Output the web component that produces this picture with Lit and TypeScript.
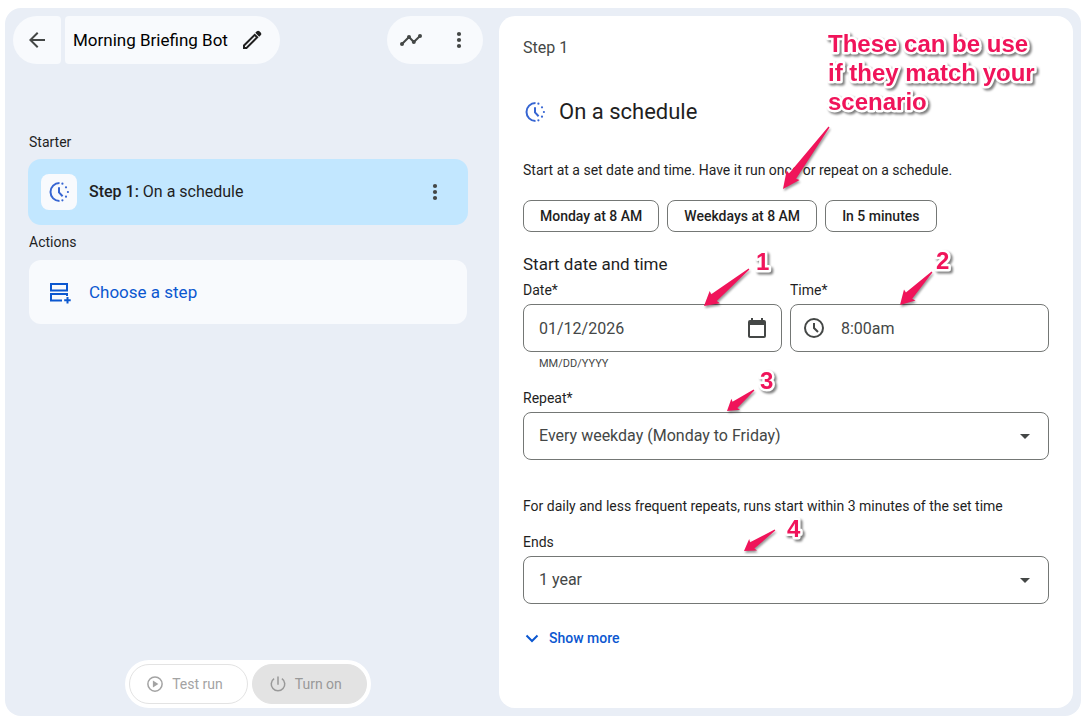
import { LitElement, html, svg, css } from "lit";
import { customElement } from "lit/decorators.js";

type Point = [number, number];

/** Tapered arrow outline running from a thin tail to a barbed tip. */
function arrowPoints(tail: Point, tip: Point, head: number, wing: number): string {
  const dx = tail[0] - tip[0];
  const dy = tail[1] - tip[1];
  const len = Math.hypot(dx, dy);
  const ux = dx / len;
  const uy = dy / len;
  const at = (along: number, side: number) =>
    `${(tip[0] + ux * along + uy * side).toFixed(1)},${(tip[1] + uy * along - ux * side).toFixed(1)}`;
  const neck = wing * 0.55;
  return [
    at(len, -0.6),
    at(head - 1, -neck),
    at(head, -wing),
    at(0, 0),
    at(head, wing),
    at(head - 1, neck),
    at(len, 0.6),
  ].join(" ");
}

const scheduleIcon = html`<svg class="icon schedule" viewBox="0 0 24 24" aria-hidden="true">
  <path class="line" d="M12.5 3A9 9 0 0 0 12.5 21M12 7.2v5.2l3.6 3.8" />
  <circle cx="15.4" cy="3.7" r="1.1" />
  <circle cx="19" cy="7.3" r="1.1" />
  <circle cx="20.9" cy="12" r="1.1" />
  <circle cx="19" cy="16.7" r="1.1" />
  <circle cx="15.4" cy="20.3" r="1.1" />
</svg>`;

const moreIcon = html`<svg class="icon" viewBox="0 0 24 24" aria-hidden="true">
  <circle cx="12" cy="6" r="2.1" /><circle cx="12" cy="12" r="2.1" /><circle cx="12" cy="18" r="2.1" />
</svg>`;

const caretIcon = html`<svg class="icon caret" viewBox="0 0 24 24" aria-hidden="true">
  <path d="M7 10l5 5 5-5z" />
</svg>`;

@customElement("app-root")
export class AppRoot extends LitElement {
  static styles = css`
    :host {
      display: flex;
      box-sizing: border-box;
      min-height: 100vh;
      padding: 8px 4px 5px 5px;
      background: #fff;
      color: #1f1f1f;
      font-family: Roboto, "Liberation Sans", sans-serif;
      font-size: 14px;
      line-height: 20px;
    }
    * { box-sizing: border-box; }
    button, input, select { font: inherit; color: inherit; margin: 0; }
    button { border: 0; padding: 0; background: none; cursor: pointer; }
    h1, h2, h3, p { margin: 0; font-weight: 400; }
    .icon { width: 24px; height: 24px; flex: none; display: block; fill: currentColor; }
    .line { fill: none; stroke: currentColor; stroke-width: 2; }
    .schedule { color: #3665d2; }

    .shell {
      flex: 1;
      display: grid;
      grid-template-columns: 235fr 287fr;
      gap: 16px;
      padding: 8px;
      border-radius: 16px;
      background: #e9eef6;
    }
    .flow { display: flex; flex-direction: column; min-width: 0; }

    .toolbar { display: flex; justify-content: space-between; color: #444746; }
    .group { display: flex; gap: 4px; }
    .square { width: 48px; height: 48px; display: grid; place-items: center; color: #444746; }
    .back { border-radius: 24px 4px 4px 24px; background: #f8fafd; }
    .name {
      display: flex;
      align-items: center;
      gap: 12px;
      height: 48px;
      padding: 0 16px 0 8px;
      border-radius: 4px 24px 24px 4px;
      background: #f8fafd;
      color: #1f1f1f;
    }
    .name h1 { font-size: 17px; line-height: 24px; font-weight: 450; color: #000; }
    .tools { display: flex; border-radius: 24px; background: #f8fafd; }

    .steps { flex: 1; padding: 68px 16px 0; }
    .steps h2 { font-size: 14px; line-height: 20px; font-weight: 450; }
    .step {
      display: flex;
      align-items: center;
      gap: 12px;
      width: 100%;
      height: 64px;
      margin: 8px 0;
      padding: 0 8px 0 12px;
      border-radius: 12px;
      background: #f8fafd;
      font-size: 16px;
      line-height: 24px;
      text-align: left;
    }
    .selected { background: #c2e7ff; box-shadow: 0 0 0 1px #c2e7ff; }
    .selected .label { flex: 1; }
    .selected b { font-weight: 500; }
    .badge { width: 36px; height: 36px; display: grid; place-items: center; border-radius: 8px; }
    .selected .badge { background: #f8fafd; }
    .choose { color: #0b57d0; font-size: 17px; font-weight: 450; }

    .runbar {
      align-self: center;
      display: flex;
      gap: 4px;
      padding: 4px;
      border-radius: 24px;
      background: #fff;
    }
    .run {
      display: flex;
      align-items: center;
      gap: 8px;
      height: 40px;
      padding: 0 24px 0 16px;
      border-radius: 20px;
      border: 1px solid #e3e3e3;
      color: #a3a3a3;
    }
    .run .icon { width: 18px; height: 18px; }
    .on { background: #e3e3e3; font-weight: 450; color: #999; }

    .panel {
      position: relative;
      display: flex;
      flex-direction: column;
      min-width: 0;
      padding: 20px 24px 24px;
      border-radius: 16px;
      background: #fff;
    }
    .crumb { font-size: 16px; line-height: 24px; color: #444746; }
    .heading { display: flex; align-items: center; gap: 12px; margin-top: 38px; }
    .heading h2 { font-size: 22px; line-height: 28px; }
    .intro { margin-top: 34px; }
    .chips { display: flex; flex-wrap: wrap; gap: 8px; margin-top: 20px; }
    .chip {
      height: 32px;
      padding: 0 16px;
      border: 1px solid #747775;
      border-radius: 8px;
      font-weight: 500;
    }
    .section { margin-top: 20px; font-size: 17px; line-height: 24px; font-weight: 450; }
    .pair { display: grid; grid-template-columns: 1fr 1fr; gap: 8px; margin-top: 4px; }
    .field { display: flex; flex-direction: column; gap: 4px; min-width: 0; }
    .field label { font-weight: 450; }
    .box {
      display: flex;
      align-items: center;
      height: 48px;
      border: 1px solid #747775;
      border-radius: 8px;
      color: #444746;
      font-size: 16px;
      line-height: 24px;
    }
    .box input {
      flex: 1;
      min-width: 0;
      height: 100%;
      padding: 0 15px;
      border: 0;
      outline: 0;
      background: none;
    }
    .box .clock { margin-left: 11px; }
    .pick { width: 48px; height: 100%; display: grid; place-items: center; }
    .hint { padding-left: 16px; font-size: 11px; line-height: 16px; color: #444746; }
    .choice { display: grid; }
    .choice select, .choice .icon { grid-area: 1 / 1; }
    .choice select {
      width: 100%;
      height: 100%;
      padding: 0 48px 0 15px;
      border: 0;
      outline: 0;
      border-radius: 8px;
      background: none;
      appearance: none;
    }
    .choice .icon { justify-self: end; margin-right: 11px; pointer-events: none; }
    .repeat { margin-top: 16px; }
    .note { margin-top: 36px; }
    .ends { margin-top: 16px; }
    .more {
      align-self: flex-start;
      display: flex;
      align-items: center;
      gap: 8px;
      margin-top: 24px;
      color: #0b57d0;
      font-weight: 500;
    }
    .more .icon { width: 18px; height: 18px; }

    .marks {
      position: absolute;
      top: 0;
      left: 0;
      width: 574px;
      height: 692px;
      pointer-events: none;
      font: bold 24px/29px "Liberation Sans", Arial, sans-serif;
      fill: #f0145a;
      overflow: visible;
    }
    .marks text {
      stroke: #fff;
      stroke-width: 5px;
      stroke-linejoin: round;
      paint-order: stroke;
      filter: drop-shadow(2px 2px 1px rgba(0, 0, 0, 0.5));
    }
    .marks polygon { filter: drop-shadow(1px 2px 1px rgba(0, 0, 0, 0.4)); }
  `;

  private arrows: { tail: Point; tip: Point; head: number; wing: number }[] = [
    { tail: [330, 111], tip: [284, 173], head: 17, wing: 8 },
    { tail: [250, 253], tip: [205, 290], head: 14, wing: 8 },
    { tail: [433, 256], tip: [401, 289], head: 14, wing: 8 },
    { tail: [255, 374], tip: [228, 395], head: 11, wing: 7 },
    { tail: [276, 514], tip: [245, 535], head: 11, wing: 7 },
  ];

  private captions: { x: number; y: number; text: string }[] = [
    { x: 329, y: 36, text: "These can be use" },
    { x: 329, y: 65, text: "if they match your" },
    { x: 329, y: 94, text: "scenario" },
    { x: 257, y: 254, text: "1" },
    { x: 437, y: 253, text: "2" },
    { x: 261, y: 373, text: "3" },
    { x: 288, y: 521, text: "4" },
  ];

  render() {
    return html`
      <main class="shell">
        <div class="flow">
          <header class="toolbar">
            <div class="group">
              <button class="square back" aria-label="Back">
                <svg class="icon" viewBox="0 0 24 24"><path d="M20 11H7.83l5.59-5.59L12 4l-8 8 8 8 1.41-1.41L7.83 13H20z" /></svg>
              </button>
              <div class="name">
                <h1>Morning Briefing Bot</h1>
                <button aria-label="Rename">
                  <svg class="icon" viewBox="0 0 24 24">
                    <path d="M3 17.1V21h3.9L18.6 9.3l-3.9-3.9zM5 19v-1.1l9.7-9.7 1.1 1.1L6.1 19zM20.7 7.2a1.9 1.9 0 0 0 0-2.6l-1.3-1.3a1.9 1.9 0 0 0-2.6 0l-1.5 1.5 3.9 3.9z" fill-rule="evenodd" />
                  </svg>
                </button>
              </div>
            </div>
            <div class="tools">
              <button class="square" aria-label="Activity">
                <svg class="icon" viewBox="0 0 24 24">
                  <path class="line" d="M3 16l7-7 4.800 5L21 8" />
                  <circle cx="3" cy="16" r="2" /><circle cx="10" cy="9" r="2" />
                  <circle cx="14.800" cy="14" r="2" /><circle cx="21" cy="8" r="2" />
                </svg>
              </button>
              <button class="square" aria-label="More options">${moreIcon}</button>
            </div>
          </header>

          <section class="steps">
            <h2>Starter</h2>
            <div class="step selected">
              <span class="badge">${scheduleIcon}</span>
              <span class="label"><b>Step 1:</b> On a schedule</span>
              <button class="square" aria-label="Step options">${moreIcon}</button>
            </div>
            <h2>Actions</h2>
            <button class="step choose">
              <span class="badge">
                <svg class="icon" viewBox="0 0 24 24">
                  <path class="line" d="M4 4h16v6.500H4zM20 16v-2H4v6.500h11M20.500 17v6.500M17.200 20.300h6.500" />
                </svg>
              </span>
              <span>Choose a step</span>
            </button>
          </section>

          <footer class="runbar">
            <button class="run">
              <svg class="icon" viewBox="0 0 24 24"><circle class="line" cx="12" cy="12" r="9.500" /><path d="M9.200 7.300v9.400l7.300-4.700z" /></svg>
              Test run
            </button>
            <button class="run on">
              <svg class="icon" viewBox="0 0 24 24"><path class="line" d="M12 2v11M6.800 4.800a9 9 0 1 0 10.400 0" /></svg>
              Turn on
            </button>
          </footer>
        </div>

        <section class="panel">
          <p class="crumb">Step 1</p>
          <div class="heading">${scheduleIcon}<h2>On a schedule</h2></div>
          <p class="intro">Start at a set date and time. Have it run once or repeat on a schedule.</p>
          <div class="chips">
            <button class="chip">Monday at 8 AM</button>
            <button class="chip">Weekdays at 8 AM</button>
            <button class="chip">In 5 minutes</button>
          </div>

          <h3 class="section">Start date and time</h3>
          <div class="pair">
            <div class="field">
              <label for="date">Date*</label>
              <div class="box">
                <input id="date" type="text" value="01/12/2026" aria-describedby="date-hint" />
                <button class="pick" aria-label="Open calendar">
                  <svg class="icon" viewBox="0 0 24 24">
                    <path d="M19 4h-1V2h-2v2H8V2H6v2H5a2 2 0 0 0-2 2v14c0 1.100.9 2 2 2h14a2 2 0 0 0 2-2V6a2 2 0 0 0-2-2zm0 16H5V9h14z" />
                  </svg>
                </button>
              </div>
              <span class="hint" id="date-hint">MM/DD/YYYY</span>
            </div>
            <div class="field">
              <label for="time">Time*</label>
              <div class="box">
                <svg class="icon clock" viewBox="0 0 24 24"><path class="line" d="M12 3a9 9 0 1 0 0 18a9 9 0 1 0 0-18zM12 7v5l4 4" /></svg>
                <input id="time" type="text" value="8:00am" />
              </div>
            </div>
          </div>

          <div class="field repeat">
            <label for="repeat">Repeat*</label>
            <div class="box choice">
              <select id="repeat"><option>Every weekday (Monday to Friday)</option></select>
              ${caretIcon}
            </div>
          </div>
          <p class="note">For daily and less frequent repeats, runs start within 3 minutes of the set time</p>
          <div class="field ends">
            <label for="ends">Ends</label>
            <div class="box choice">
              <select id="ends"><option>1 year</option></select>
              ${caretIcon}
            </div>
          </div>
          <button class="more">
            <svg class="icon" viewBox="0 0 18 18"><path class="line" d="M3.500 6.500L9 12l5.500-5.500" /></svg>
            Show more
          </button>

          <svg class="marks" viewBox="0 0 574 692">
            ${this.arrows.map((a) => svg`<polygon points=${arrowPoints(a.tail, a.tip, a.head, a.wing)} />`)}
            ${this.captions.map((c) => svg`<text x=${c.x} y=${c.y}>${c.text}</text>`)}
          </svg>
        </section>
      </main>
    `;
  }
}
